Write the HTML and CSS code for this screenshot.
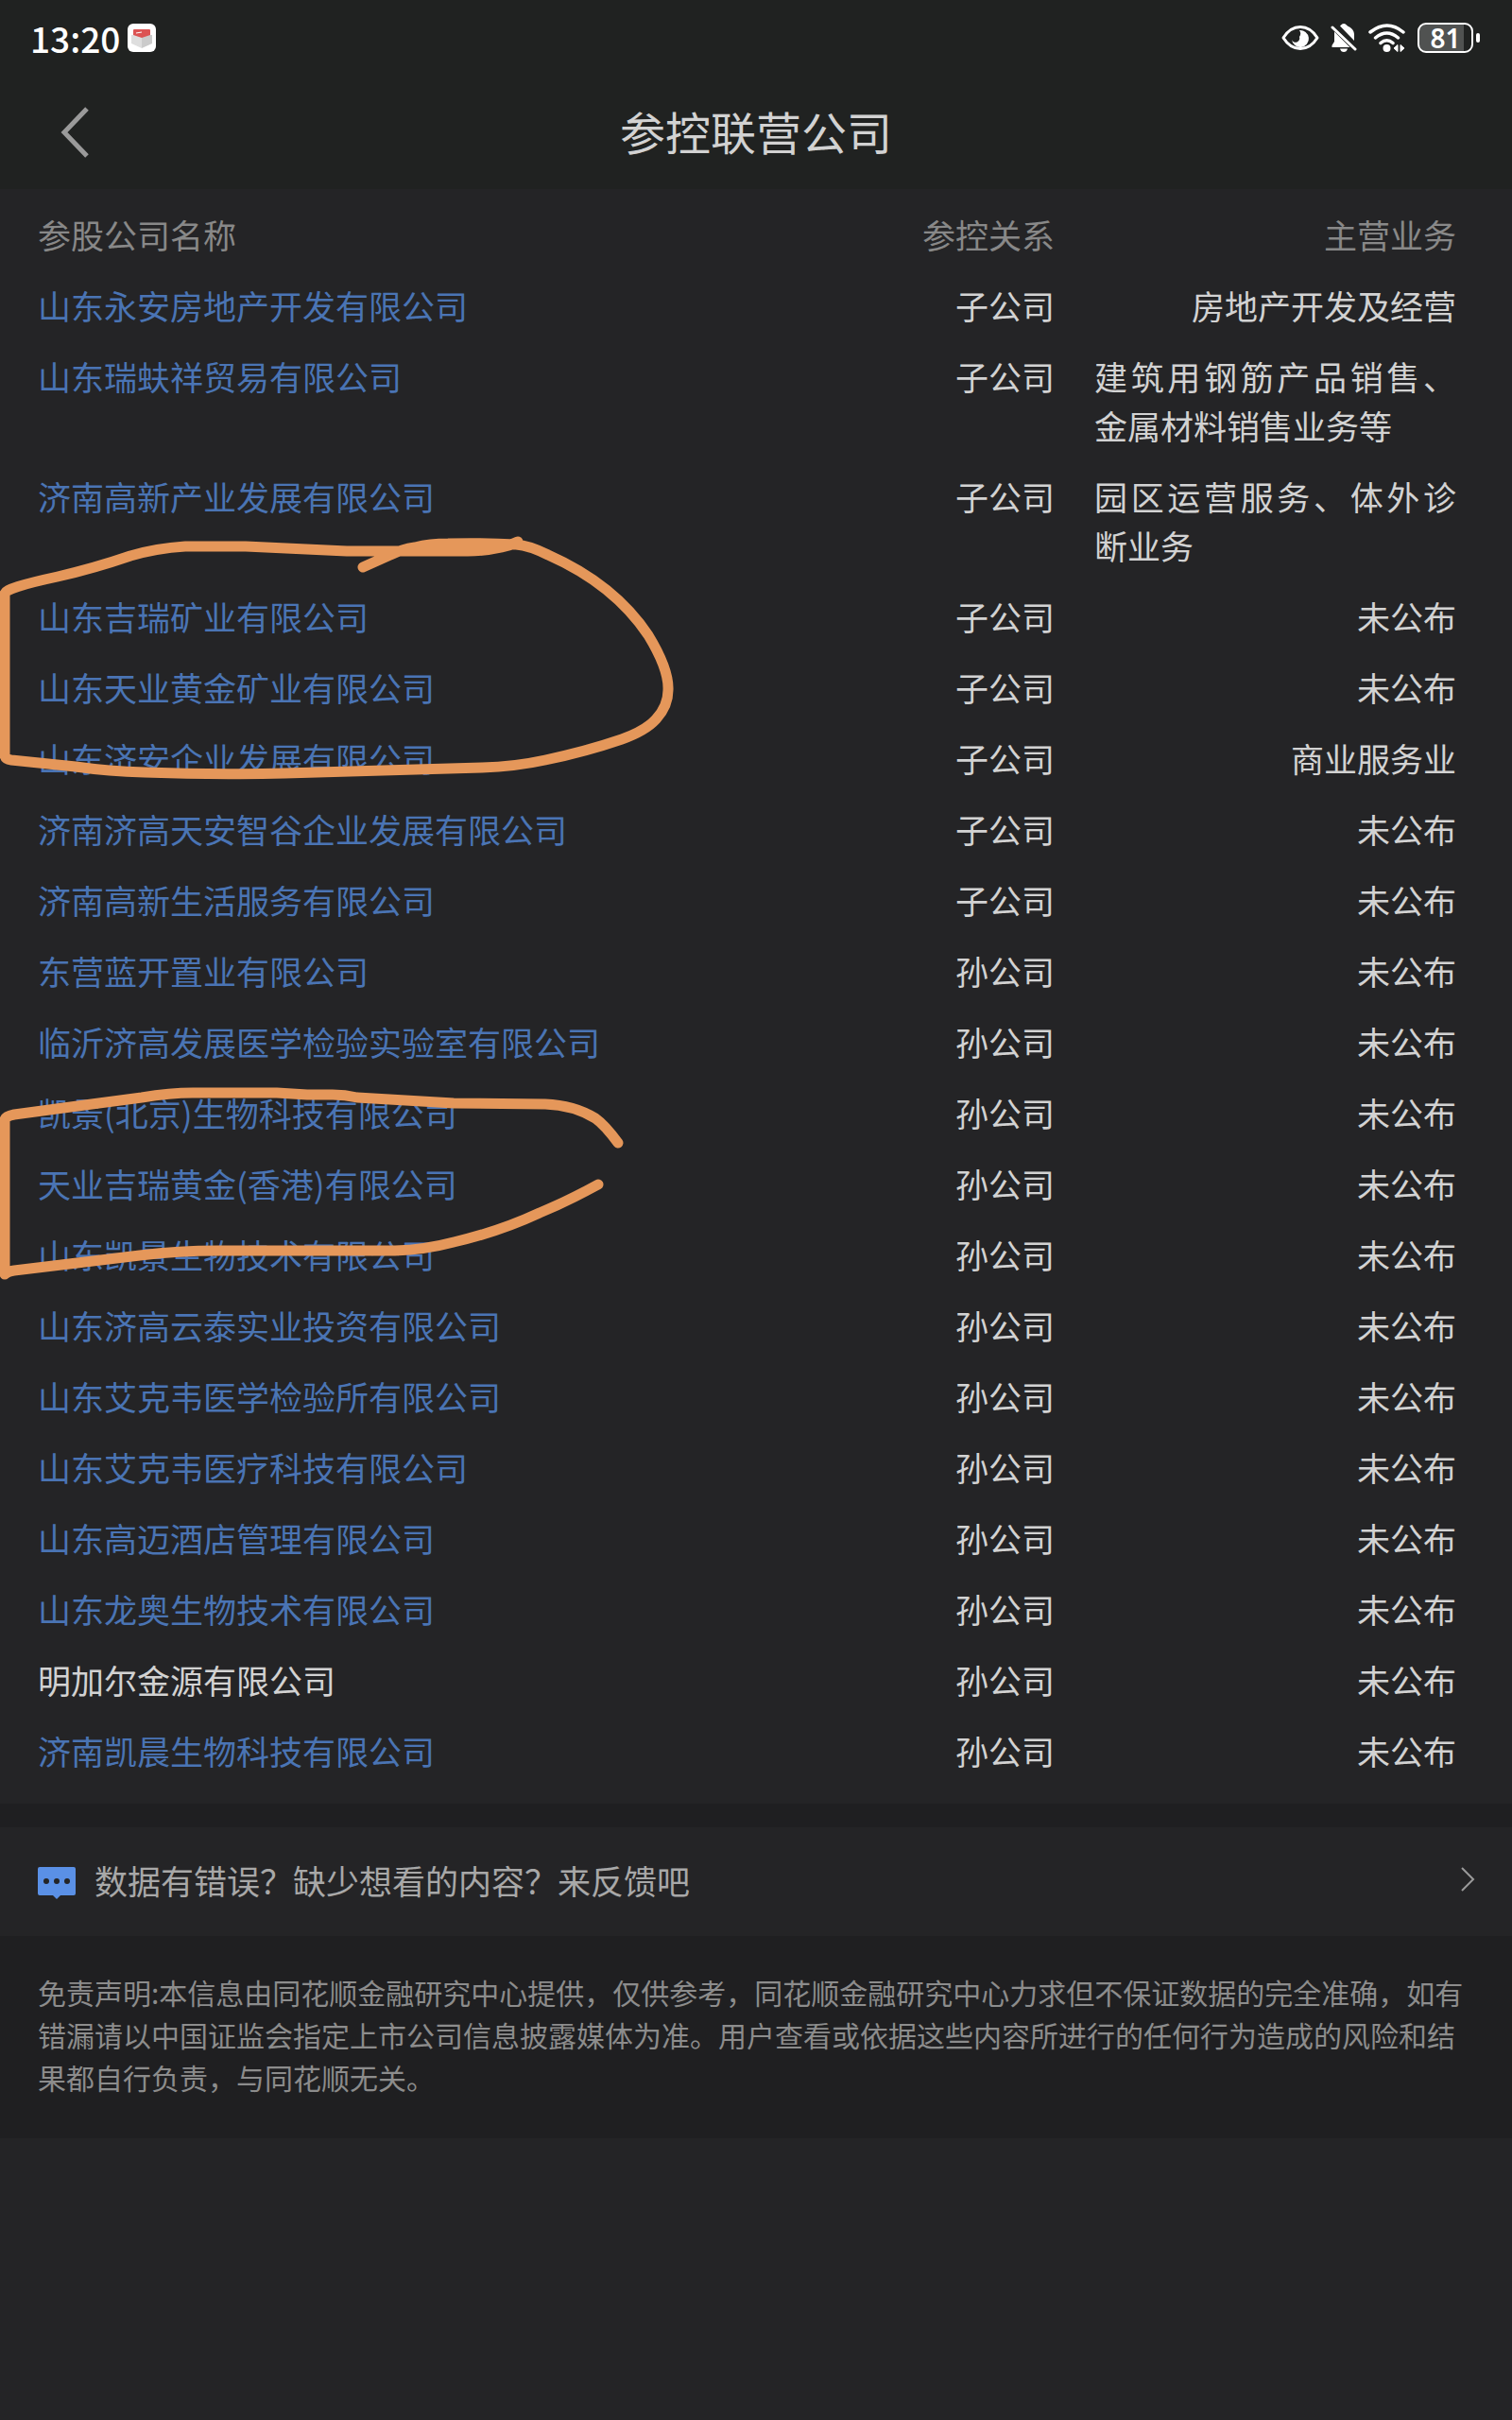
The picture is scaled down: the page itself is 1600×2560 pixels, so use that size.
FILE: index.html
```html
<!DOCTYPE html>
<html lang="zh-CN">
<head>
    <meta charset="UTF-8">
    <meta name="viewport" content="width=device-width, initial-scale=1.0">
    <title>参控联营公司</title>
    <link rel="stylesheet" href="styles.css">
</head>
<body>
    <div class="status-bar">
        <span class="time">13:20</span>
        <svg class="app-icon" width="30" height="30" viewBox="0 0 30 30">
            <rect width="30" height="30" rx="6" fill="#fff"/>
            <path d="M4 12h11v14L4 21z" fill="#dedede"/>
            <path d="M15 12h11v9l-11 5z" fill="#cbcbcb"/>
            <path d="M7 6h16q1 0 1 1v5l-9 3-9-3V7q0-1 1-1z" fill="#dc5454"/>
            <path d="M9 10l6-1" stroke="#fff" stroke-width="1"/>
        </svg>
        <div class="status-icons">
            <svg width="40" height="32" viewBox="0 0 40 32">
                <path d="M2 16C7 8 13 4.500 20 4.500S33 8 38 16C33 24 27 27.500 20 27.500S7 24 2 16z" fill="none" stroke="#fff" stroke-width="3" stroke-linejoin="round"/>
                <path d="M19 8a9 9 0 1 1-8 10a4 4 0 0 0 8-3a6 6 0 0 0 0-7z" fill="#fff"/>
            </svg>
            <svg width="28" height="32" viewBox="0 0 28 32">
                <path d="M10 3.500C11 2.500 12 1 14 1s3 1.500 4 2.500c4 1.500 7 5 7 9V19z" fill="#fff"/>
                <path d="M4 9.500L20.500 26H1.500v-2L4 20z" fill="#fff"/>
                <path d="M10 27.500h8q-1 3.500-4 3.500t-4-3.500z" fill="#fff"/>
                <path d="M2 5l24 23" stroke="#fff" stroke-width="3" stroke-linecap="round"/>
            </svg>
            <svg width="40" height="32" viewBox="0 0 40 32">
                <path d="M2 10q18-14 35 0M7.500 16q12-10 24 0M13 21.500q6.500-5.500 13 0" fill="none" stroke="#fff" stroke-width="3.500" stroke-linecap="round"/>
                <circle cx="19.500" cy="27" r="4" fill="#fff"/>
                <path d="M31 23.500v7l-4-3.500zM34 23.500v7l4-3.500z" fill="#fff" stroke="#fff" stroke-width="1"/>
            </svg>
            <div class="battery"><span>81</span></div>
        </div>
    </div>

    <header class="title-bar">
        <button class="back" type="button" aria-label="返回">
            <svg width="30" height="54" viewBox="0 0 30 54">
                <path d="M28 2L4 27l24 25" fill="none" stroke="#9a9a9a" stroke-width="5"/>
            </svg>
        </button>
        <h1>参控联营公司</h1>
    </header>

    <main class="companies">
        <table>
            <thead>
                <tr><th class="name">参股公司名称</th><th class="relation">参控关系</th><th class="business">主营业务</th></tr>
            </thead>
            <tbody>
                <tr><td><a href="#">山东永安房地产开发有限公司</a></td><td>子公司</td><td>房地产开发及经营</td></tr>
                <tr><td><a href="#">山东瑞蚨祥贸易有限公司</a></td><td>子公司</td><td class="long">建筑用钢筋产品销售、金属材料销售业务等</td></tr>
                <tr><td><a href="#">济南高新产业发展有限公司</a></td><td>子公司</td><td class="long">园区运营服务、体外诊断业务</td></tr>
                <tr><td><a href="#">山东吉瑞矿业有限公司</a></td><td>子公司</td><td>未公布</td></tr>
                <tr><td><a href="#">山东天业黄金矿业有限公司</a></td><td>子公司</td><td>未公布</td></tr>
                <tr><td><a href="#">山东济安企业发展有限公司</a></td><td>子公司</td><td>商业服务业</td></tr>
                <tr><td><a href="#">济南济高天安智谷企业发展有限公司</a></td><td>子公司</td><td>未公布</td></tr>
                <tr><td><a href="#">济南高新生活服务有限公司</a></td><td>子公司</td><td>未公布</td></tr>
                <tr><td><a href="#">东营蓝开置业有限公司</a></td><td>孙公司</td><td>未公布</td></tr>
                <tr><td><a href="#">临沂济高发展医学检验实验室有限公司</a></td><td>孙公司</td><td>未公布</td></tr>
                <tr><td><a href="#">凯景(北京)生物科技有限公司</a></td><td>孙公司</td><td>未公布</td></tr>
                <tr><td><a href="#">天业吉瑞黄金(香港)有限公司</a></td><td>孙公司</td><td>未公布</td></tr>
                <tr><td><a href="#">山东凯景生物技术有限公司</a></td><td>孙公司</td><td>未公布</td></tr>
                <tr><td><a href="#">山东济高云泰实业投资有限公司</a></td><td>孙公司</td><td>未公布</td></tr>
                <tr><td><a href="#">山东艾克韦医学检验所有限公司</a></td><td>孙公司</td><td>未公布</td></tr>
                <tr><td><a href="#">山东艾克韦医疗科技有限公司</a></td><td>孙公司</td><td>未公布</td></tr>
                <tr><td><a href="#">山东高迈酒店管理有限公司</a></td><td>孙公司</td><td>未公布</td></tr>
                <tr><td><a href="#">山东龙奥生物技术有限公司</a></td><td>孙公司</td><td>未公布</td></tr>
                <tr><td>明加尔金源有限公司</td><td>孙公司</td><td>未公布</td></tr>
                <tr><td><a href="#">济南凯晨生物科技有限公司</a></td><td>孙公司</td><td>未公布</td></tr>
            </tbody>
        </table>

        <!-- 手绘圈注 -->
        <svg class="marks" width="720" height="1200" viewBox="0 200 720 1200">
            <path d="M548 573Q540 577 531 579Q513 583 495 583H367L260 578H196Q165 580 138 588Q100 601 61 610Q5 622 5 628V798Q5 803 12 804L80 811Q115 816 153 817Q227 820 301 818L510 812Q545 811 577 804Q620 795 658 782Q683 773 694 761Q707 747 707 730Q708 708 686 672Q650 618 580 587Q560 577 546 576Q510 574 474 575Q455 575 439 579Q425 581 413 587L384 600"/>
            <path d="M654 1209Q640 1190 630 1183Q607 1169 577 1168L480 1167L378 1161Q365 1158 352 1158H325L293 1156H204Q180 1156 150 1161L97 1168L15 1179Q5 1181 5 1185V1348Q8 1345 15 1344L148 1328Q190 1323 230 1323H418Q450 1322 480 1314Q528 1303 571 1283Q600 1271 633 1253"/>
        </svg>
    </main>

    <a class="feedback" href="#">
        <svg width="40" height="40" viewBox="0 -6 40 40">
            <path d="M2 0h36q2 0 2 2v26q0 2-2 2H24l-4 4-4-4H2q-2 0-2-2V2q0-2 2-2z" fill="#5a90e6"/>
            <circle cx="9" cy="15" r="3" fill="#242426"/>
            <circle cx="20" cy="15" r="3" fill="#242426"/>
            <circle cx="31" cy="15" r="3" fill="#242426"/>
        </svg>
        <span>数据有错误？缺少想看的内容？来反馈吧</span>
        <svg class="arrow" width="16" height="28" viewBox="0 0 16 28">
            <path d="M2 1l12 12L2 25" fill="none" stroke="#9a9a9a" stroke-width="2"/>
        </svg>
    </a>

    <footer class="disclaimer">
        <p>免责声明:本信息由同花顺金融研究中心提供，仅供参考，同花顺金融研究中心力求但不保证数据的完全准确，如有错漏请以中国证监会指定上市公司信息披露媒体为准。用户查看或依据这些内容所进行的任何行为造成的风险和结果都自行负责，与同花顺无关。</p>
    </footer>
</body>
</html>
```
FILE: styles.css
```css
body {
    margin: 0;
    background-color: #242426;
    color: #d2d2d2;
    font-family: "Noto Sans CJK SC", sans-serif;
    font-size: 35px;
    line-height: 52px;
}
a {
    color: #4a74b4;
    text-decoration: none;
}
.status-bar {
    display: flex;
    align-items: center;
    height: 80px;
    padding: 0 34px 0 32px;
    background-color: #202221;
    color: #fff;
}
.time {
    font-size: 37px;
    font-weight: 500;
}
.app-icon {
    margin-left: 8px;
}
.status-icons {
    display: flex;
    align-items: center;
    gap: 12px;
    margin-left: auto;
}
.battery {
    position: relative;
    box-sizing: border-box;
    width: 59px;
    height: 32px;
    margin-right: 7px;
    border: 2px solid #fff;
    border-radius: 9px;
    background: linear-gradient(to right, #505251 85%, #202221 85%);
    font-family: "Noto Sans", sans-serif;
    font-size: 28px;
    font-weight: 600;
    line-height: 28px;
    text-align: center;
}
.battery::after {
    content: "";
    position: absolute;
    top: 9px;
    right: -9px;
    width: 4px;
    height: 10px;
    border-radius: 2px;
    background-color: #fff;
}
.title-bar {
    display: grid;
    grid-template-columns: 1fr auto 1fr;
    align-items: center;
    height: 120px;
    padding: 0 64px;
    background-color: #202221;
}
.title-bar h1 {
    margin: 0;
    padding-bottom: 4px;
    font-size: 48px;
    font-weight: 400;
    line-height: 72px;
}
.back {
    display: flex;
    justify-self: start;
    padding: 0;
    border: none;
    background: none;
    cursor: pointer;
}
.companies {
    position: relative;
    padding: 12px 59px 17px 40px;
}
table {
    width: 100%;
    border-collapse: collapse;
    table-layout: fixed;
}
th, td {
    padding: 10px 0 13px;
    font-weight: 400;
    text-align: right;
    vertical-align: top;
}
th {
    color: #888;
}
th:first-child, td:first-child {
    text-align: left;
}
.relation {
    width: 200px;
}
.business {
    width: 383px;
    padding-left: 42px;
}
td:last-child {
    padding-left: 42px;
}
td.long {
    text-align: justify;
}
.marks {
    position: absolute;
    top: 0;
    left: 0;
    fill: none;
    stroke: #e5975a;
    stroke-width: 11px;
    stroke-linecap: round;
    stroke-linejoin: round;
    pointer-events: none;
}
.feedback {
    display: flex;
    align-items: center;
    gap: 20px;
    height: 111px;
    padding: 0 39px 4px 40px;
    border-top: 25px solid #1f1f21;
    color: #a8a8a8;
}
.arrow {
    margin-left: auto;
}
.disclaimer {
    padding: 37px 40px 42px;
    background-color: #1f1f21;
    color: #8c8c8c;
    font-size: 30px;
    line-height: 45px;
}
.disclaimer p {
    margin: 0;
}
```
